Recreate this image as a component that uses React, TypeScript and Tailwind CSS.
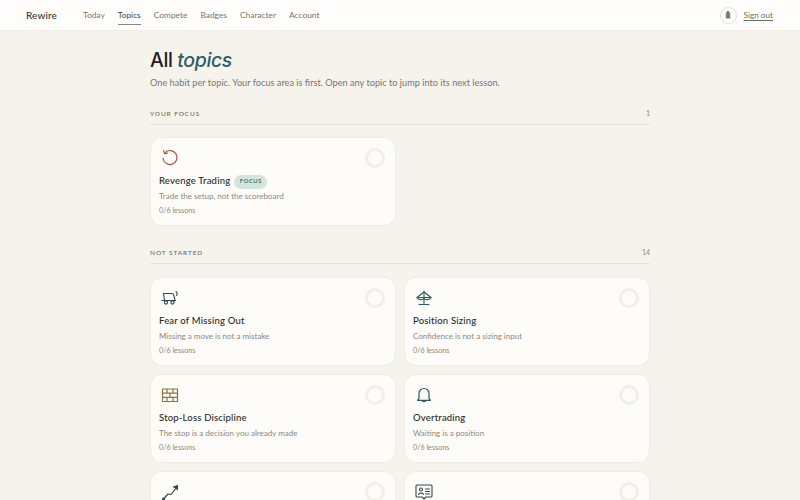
import type { ReactNode } from 'react';

const stroke = '#2f5d62';

const icons: Record<string, ReactNode> = {
  revenge: (
    <svg viewBox="0 0 20 20" className="w-[20px] h-[20px]" fill="none" stroke="#b5544c" strokeWidth="1.2" strokeLinecap="round" strokeLinejoin="round">
      <path d="M5 4.600A7 7 0 1 1 3 10" />
      <path d="M3.600 2.600l.9 3 3-.5" />
    </svg>
  ),
  cart: (
    <svg viewBox="0 0 20 20" className="w-[20px] h-[20px]" fill="none" stroke="#2f4a4d" strokeWidth="1.1" strokeLinecap="round" strokeLinejoin="round">
      <path d="M3.500 5.500h8.500c.8 0 1.500.5 1.700 1.300l1.300 5.700H4.500z" />
      <path d="M2 12.500h13.500" />
      <circle cx="6" cy="14.500" r="1.600" />
      <circle cx="12.500" cy="14.500" r="1.600" />
      <path d="M16 3.500c1.200.8 1.500 2.500.5 3.800" />
    </svg>
  ),
  scale: (
    <svg viewBox="0 0 20 20" className="w-[20px] h-[20px]" fill="none" stroke={stroke} strokeWidth="1.1" strokeLinecap="round" strokeLinejoin="round">
      <path d="M10 3v13" />
      <path d="M5 16.500h10" />
      <path d="M3 9.500l7-5.500 7 5.500" />
      <path d="M3 9.500c1 2.500 5.500 3 7 .8 1.500 2.200 6 1.700 7-.8z" />
    </svg>
  ),
  wall: (
    <svg viewBox="0 0 20 20" className="w-[20px] h-[20px]" fill="none" stroke="#8a7440" strokeWidth="1.2" strokeLinejoin="round">
      <rect x="2.500" y="4" width="15" height="12.500" />
      <path d="M2.500 8.200h15M2.500 12.400h15M7 4v4.200M13 4v4.200M10 8.200v4.200M7 12.400v4.100M13 12.400v4.100" />
    </svg>
  ),
  bell: (
    <svg viewBox="0 0 20 20" className="w-[20px] h-[20px]" fill="none" stroke={stroke} strokeWidth="1.2" strokeLinecap="round" strokeLinejoin="round">
      <path d="M5 13.500V8.500a5 5 0 0 1 10 0v5l1.500 1.800h-13z" />
      <path d="M8.300 15.500a1.800 1.800 0 0 0 3.400 0" />
    </svg>
  ),
  trend: (
    <svg viewBox="0 0 20 20" className="w-[20px] h-[20px]" fill="none" stroke="#2f4a4d" strokeWidth="1.2" strokeLinecap="round" strokeLinejoin="round">
      <path d="M3.500 17l4.500-5 3 .5 5.500-7" />
      <path d="M13.500 5l4-1.500-.2 4.200" fill="#2f4a4d" />
      <circle cx="3.500" cy="17" r="1" fill="#2f5d62" />
    </svg>
  ),
  card: (
    <svg viewBox="0 0 20 20" className="w-[20px] h-[20px]" fill="none" stroke="#2f4a4d" strokeWidth="1.1" strokeLinecap="round" strokeLinejoin="round">
      <path d="M3 3h14a1 1 0 0 1 1 1v10a1 1 0 0 1-1 1h-5l-2 2-2-2H3a1 1 0 0 1-1-1V4a1 1 0 0 1 1-1z" />
      <circle cx="7" cy="7.500" r="1.500" />
      <path d="M4.500 12.500c.4-1.800 4.600-1.800 5 0M11.500 7h4M11.500 9.500h4M11.500 12h4" />
    </svg>
  ),
};

function TopicCard({ icon, title, blurb, focus }: { icon: string; title?: string; blurb?: string; focus?: boolean }) {
  return (
    <div className="h-[89px] rounded-[12px] border border-[#f0ece4] bg-[#fdfcf8] pl-[8px] pr-[10px] pt-[8.500px] flex flex-col">
      <div className="flex justify-between items-start h-[22px]">
        <div className="w-[22px] h-[22px] flex items-center justify-center">{icons[icon]}</div>
        <div className="w-[20px] h-[20px] mt-[1px] rounded-full border-[3px] border-[#f1efe8]" />
      </div>
      {title && (
        <div className="flex items-center gap-[4px] mt-[5px] h-[16px]">
          <span className="text-[9.500px] font-medium text-[#2a2a28] tracking-[0.02em]">{title}</span>
          {focus && (
            <span className="h-[14px] px-[5.500px] rounded-full bg-[#d3e5dc] text-[5.800px] font-semibold tracking-[0.1em] text-[#3c6156] flex items-center">
              FOCUS
            </span>
          )}
        </div>
      )}
      {blurb && <div className="text-[8px] text-[#8b887f] mt-[-1px] leading-[14px]">{blurb}</div>}
      {title && <div className="text-[7.200px] text-[#8b887f] mt-[2.500px] leading-[12px]">0/6 lessons</div>}
    </div>
  );
}

function SectionHead({ label, count }: { label: string; count: number }) {
  return (
    <div className="flex justify-between items-center h-[18px] pb-[4px] border-b border-[#e6e2da]">
      <span className="text-[6.500px] font-medium tracking-[0.14em] text-[#6b6962]">{label}</span>
      <span className="text-[7px] text-[#8b887f]">{count}</span>
    </div>
  );
}

const links = ['Today', 'Topics', 'Compete', 'Badges', 'Character', 'Account'];

export default function App() {
  return (
    <div className="h-[500px] overflow-hidden bg-[#f6f3ed] font-['Lato',sans-serif]">
      <header className="h-[31px] bg-[#fefdfb] border-b border-[#f0ede6] flex items-center pl-[26px] pr-[27px]">
        <span className="text-[10px] font-medium text-[#33332f] w-[57px] tracking-[0.01em]">Rewire</span>
        <nav className="flex gap-[13px] items-center h-full">
          {links.map((l) => (
            <a
              key={l}
              className={
                l === 'Topics'
                  ? 'pt-[4px] pb-[3px] text-[8.400px] leading-[12px] text-[#44443f] border-b border-[#888880]'
                  : 'pt-[4px] pb-[3px] text-[8.400px] leading-[12px] text-[#77756d] border-b border-transparent'
              }
            >
              {l}
            </a>
          ))}
        </nav>
        <div className="ml-auto flex items-center gap-[7px]">
          <div className="w-[17px] h-[17px] rounded-full border border-[#e6e3dc] flex items-center justify-center">
            <svg viewBox="0 0 10 10" className="w-[10px] h-[10px]" fill="#7c7b74">
              <path d="M3.800 1h2.400v1.200l1 1v5.300H2.800V3.200l1-1z" />
            </svg>
          </div>
          <a className="text-[8.200px] text-[#5f7268] underline underline-offset-2">Sign out</a>
        </div>
      </header>

      <main className="w-[500px] mx-auto pt-[16px]">
        <h1 className="font-['Inter',sans-serif] text-[19.500px] leading-[26px] font-medium text-[#1f1f1d] tracking-[-0.02em]">
          All <em className="text-[#2f5d68] font-medium">topics</em>
        </h1>
        <p className="text-[9.200px] text-[#77756d] mt-[3px] leading-[14px]">
          One habit per topic. Your focus area is first. Open any topic to jump into its next lesson.
        </p>

        <div className="mt-[17px]">
          <SectionHead label="YOUR FOCUS" count={1} />
        </div>
        <div className="grid grid-cols-2 gap-[8px] mt-[12px]">
          <TopicCard icon="revenge" title="Revenge Trading" blurb="Trade the setup, not the scoreboard" focus />
        </div>

        <div className="mt-[20px]">
          <SectionHead label="NOT STARTED" count={14} />
        </div>
        <div className="grid grid-cols-2 gap-[8px] mt-[13px]">
          <TopicCard icon="cart" title="Fear of Missing Out" blurb="Missing a move is not a mistake" />
          <TopicCard icon="scale" title="Position Sizing" blurb="Confidence is not a sizing input" />
          <TopicCard icon="wall" title="Stop-Loss Discipline" blurb="The stop is a decision you already made" />
          <TopicCard icon="bell" title="Overtrading" blurb="Waiting is a position" />
          <TopicCard icon="trend" />
          <TopicCard icon="card" />
        </div>
      </main>
    </div>
  );
}
